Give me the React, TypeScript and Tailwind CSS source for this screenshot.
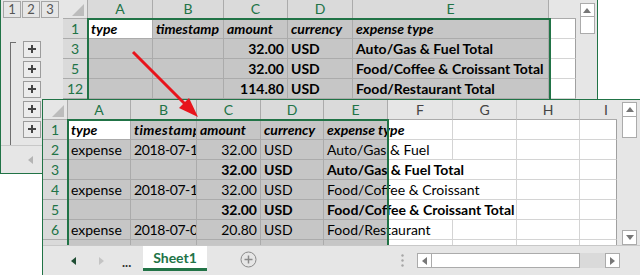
import React from 'react';

type Cell = { v?: string; n?: boolean; b?: boolean; i?: boolean; d?: boolean };

const hd = (v: string): Cell => ({ v, b: true, i: true });

// back window (outlined, collapsed to totals)
const backW = ['w-[65px]', 'w-[71px]', 'w-[64px]', 'w-[65px]', 'w-[196px]'];
const backRows: { n: string; c: Cell[] }[] = [
  { n: '1', c: [hd('type'), hd('timestamp'), hd('amount'), hd('currency'), hd('expense type')] },
  { n: '3', c: [{}, {}, { v: '32.00', n: true, b: true }, { v: 'USD', b: true }, { v: 'Auto/Gas & Fuel Total', b: true }] },
  { n: '5', c: [{}, {}, { v: '32.00', n: true, b: true }, { v: 'USD', b: true }, { v: 'Food/Coffee & Croissant Total', b: true }] },
  { n: '12', c: [{}, {}, { v: '114.80', n: true, b: true }, { v: 'USD', b: true }, { v: 'Food/Restaurant Total', b: true }] },
  { n: '16', c: [{}, {}, {}, {}, {}] },
  { n: '19', c: [{}, {}, {}, {}, {}] },
];

// front window (expanded)
const frontW = ['w-[63px]', 'w-[66px]', 'w-[64px]', 'w-[63px]', 'w-[64px]'];
const frontRows: { n: string; spill?: boolean; c: Cell[] }[] = [
  { n: '1', c: [hd('type'), { v: 'timestamp', b: true, i: true, d: true }, hd('amount'), hd('currency'), hd('expense type')] },
  { n: '2', c: [{ v: 'expense' }, { v: '2018-07-10', d: true }, { v: '32.00', n: true }, { v: 'USD' }, { v: 'Auto/Gas & Fuel' }] },
  { n: '3', spill: true, c: [{}, {}, { v: '32.00', n: true, b: true }, { v: 'USD', b: true }, { v: 'Auto/Gas & Fuel Total', b: true }] },
  { n: '4', spill: true, c: [{ v: 'expense' }, { v: '2018-07-12', d: true }, { v: '32.00', n: true }, { v: 'USD' }, { v: 'Food/Coffee & Croissant' }] },
  { n: '5', spill: true, c: [{}, {}, { v: '32.00', n: true, b: true }, { v: 'USD', b: true }, { v: 'Food/Coffee & Croissant Total', b: true }] },
  { n: '6', c: [{ v: 'expense' }, { v: '2018-07-08', d: true }, { v: '20.80', n: true }, { v: 'USD' }, { v: 'Food/Restaurant' }] },
  { n: '7', c: [{ v: 'expense' }, { v: '2018-07-06', d: true }, { v: '94.00', n: true }, { v: 'USD' }, { v: 'Food/Restaurant' }] },
];

const cellText = (c: Cell) =>
  `${c.n ? 'text-right' : ''} ${c.b ? 'font-bold' : ''} ${c.i ? 'italic' : ''} ${c.d ? (c.i ? 'tracking-[0.4px]' : 'tracking-[-0.4px]') : ''}`;

const Corner = () => (
  <div className="flex w-[25px] shrink-0 items-end justify-end border-r border-b border-[#ababab] pr-[3px] pb-[2px]">
    <svg width="12" height="12">
      <polygon points="12,0 12,12 0,12" fill="#bcbcbc" />
    </svg>
  </div>
);

const TriLeft = ({ c }: { c: string }) => (
  <svg width="5" height="8">
    <polygon points="5,0 0,4 5,8" fill={c} />
  </svg>
);
const TriRight = ({ c }: { c: string }) => (
  <svg width="5" height="8">
    <polygon points="0,0 5,4 0,8" fill={c} />
  </svg>
);
const TriUp = () => (
  <svg width="8" height="5">
    <polygon points="0,5 4,0 8,5" fill="#777" />
  </svg>
);
const TriDown = () => (
  <svg width="8" height="5">
    <polygon points="0,0 8,0 4,5" fill="#777" />
  </svg>
);

const PlusBox = () => (
  <div className="flex h-[17px] w-[18px] items-center justify-center border border-[#9c9c9c] bg-[#ececec]">
    <svg width="8" height="8">
      <rect x="0" y="3" width="8" height="2" fill="#444" />
      <rect x="3" y="0" width="2" height="8" fill="#444" />
    </svg>
  </div>
);

const BackWindow = () => (
  <div className="absolute left-0 top-0 flex h-[174px] w-[598px] flex-col overflow-hidden border-r border-b border-l border-[#217346] bg-[#e6e6e6]">
    <div className="flex h-[145px] shrink-0">
      {/* outline levels */}
      <div className="flex w-[62px] shrink-0 flex-col">
        <div className="flex h-[19px] shrink-0 gap-[1px] pt-[1px] pl-[2px]">
          {['1', '2', '3'].map((l) => (
            <div key={l} className="flex h-[17px] w-[18px] items-center justify-center border border-[#a6a6a6] text-[13px] text-[#555]">
              {l}
            </div>
          ))}
        </div>
        <div className="flex flex-1">
          <div className="w-[21px] shrink-0 pt-[23px] pl-[9px]">
            <div className="h-full w-[6px] border-t border-l border-[#6f6f6f]" />
          </div>
          <div className="flex flex-col pl-[1px]">
            <div className="h-[20px]" />
            {['3', '5', '12', '16', '19'].map((r) => (
              <div key={r} className="flex h-[20px] items-center">
                <PlusBox />
              </div>
            ))}
          </div>
        </div>
      </div>

      {/* sheet */}
      <div className="relative flex w-[513px] shrink-0 flex-col overflow-hidden">
        <div className="flex h-[19px] shrink-0">
          <Corner />
          {['A', 'B', 'C', 'D', 'E'].map((h, i) => (
            <div key={h} className={`${backW[i]} shrink-0 border-r border-b border-[#ababab] bg-[#dadada] text-center leading-[18px] text-[#217346]`}>
              {h}
            </div>
          ))}
          <div className="w-[27px] shrink-0 border-b border-[#ababab]" />
        </div>
        {backRows.map((row, r) => (
          <div key={row.n} className="flex h-[20px] shrink-0">
            <div className="w-[25px] shrink-0 border-r border-b border-[#ababab] bg-[#dadada] text-center leading-[19px] text-[#217346]">
              {row.n}
            </div>
            {row.c.map((c, i) => (
              <div
                key={i}
                className={`${backW[i]} shrink-0 overflow-hidden whitespace-nowrap border-r border-b border-[#ababab] px-[3px] leading-[19px] text-black ${r === 0 && i === 0 ? 'bg-white' : 'bg-[#c6c6c6]'} ${cellText(c)}`}
              >
                {c.v}
              </div>
            ))}
            <div className="w-[27px] shrink-0 border-r border-b border-[#d4d4d4] border-r-[#a0a0a0] bg-white" />
          </div>
        ))}
        <div className="pointer-events-none absolute left-[24px] top-[18px] h-[200px] w-[464px] border-2 border-[#217346]" />
      </div>

      {/* vertical scrollbar */}
      <div className="flex w-[21px] shrink-0 flex-col items-center pt-[3px] pl-[1px]">
        <div className="flex h-[14px] w-[15px] items-center justify-center border border-[#ababab] bg-white">
          <TriUp />
        </div>
        <div className="h-[17px] w-[15px] border border-t-0 border-[#ababab] bg-white" />
      </div>
    </div>

    {/* sheet tabs */}
    <div className="flex h-[28px] shrink-0 items-center border-t border-[#c8c8c8] pl-[27px]">
      <TriLeft c="#b4b4b4" />
      <div className="ml-[23px]">
        <TriRight c="#c8c8c8" />
      </div>
    </div>
  </div>
);

const FrontWindow = () => (
  <div className="absolute top-[99px] right-0 bottom-0 left-[42px] flex flex-col overflow-hidden border-t border-l border-[#217346] bg-[#e6e6e6]">
    <div className="flex h-[145px] shrink-0">
      <div className="relative flex w-[574px] shrink-0 flex-col overflow-hidden">
        <div className="flex h-[20px] shrink-0">
          <Corner />
          {['A', 'B', 'C', 'D', 'E'].map((h, i) => (
            <div key={h} className={`${frontW[i]} shrink-0 border-r border-b border-[#ababab] bg-[#dadada] text-center leading-[19px] text-[#217346]`}>
              {h}
            </div>
          ))}
          <div className="w-[65px] shrink-0 border-r border-b border-[#c6c6c6] border-b-[#ababab] text-center leading-[19px] text-[#444]">F</div>
          <div className="w-[64px] shrink-0 border-r border-b border-[#c6c6c6] border-b-[#ababab] text-center leading-[19px] text-[#444]">G</div>
          <div className="w-[63px] shrink-0 border-r border-b border-[#c6c6c6] border-b-[#ababab] text-center leading-[19px] text-[#444]">H</div>
          <div className="w-[37px] shrink-0 border-b border-[#ababab] pl-[24px] leading-[19px] text-[#444]">I</div>
        </div>
        {frontRows.map((row, r) => (
          <div key={row.n} className="flex h-[20px] shrink-0 bg-white">
            <div className="w-[25px] shrink-0 border-r border-b border-[#ababab] bg-[#dadada] text-center leading-[19px] text-[#217346]">
              {row.n}
            </div>
            {row.c.map((c, i) => (
              <div
                key={i}
                className={`${frontW[i]} shrink-0 whitespace-nowrap border-r border-b border-[#ababab] px-[3px] leading-[19px] text-black ${i === 4 ? 'overflow-visible' : 'overflow-hidden'} ${r === 0 && i === 0 ? 'bg-white' : 'bg-[#c6c6c6]'} ${cellText(c)}`}
              >
                {c.v}
              </div>
            ))}
            <div className={`w-[65px] shrink-0 border-b border-[#d4d4d4] ${row.spill ? '' : 'border-r'}`} />
            <div className="w-[64px] shrink-0 border-r border-b border-[#d4d4d4]" />
            <div className="w-[63px] shrink-0 border-r border-b border-[#d4d4d4]" />
            <div className="w-[37px] shrink-0 border-r border-b border-[#d4d4d4] border-r-[#a0a0a0]" />
          </div>
        ))}
        <div className="pointer-events-none absolute left-[24px] top-[19px] h-[200px] w-[322px] border-2 border-[#217346]" />
      </div>

      {/* vertical scrollbar */}
      <div className="flex w-[23px] shrink-0 flex-col pt-[2px] pl-[5px]">
        <div className="flex h-[15px] w-[15px] items-center justify-center border border-[#ababab] bg-white">
          <TriUp />
        </div>
        <div className="h-[21px] w-[15px] border border-t-0 border-[#ababab] bg-white" />
        <div className="flex-1" />
        <div className="flex h-[15px] w-[15px] items-center justify-center border border-[#ababab] bg-white">
          <TriDown />
        </div>
      </div>
    </div>

    {/* sheet tabs + horizontal scrollbar */}
    <div className="flex h-[30px] shrink-0 items-start border-t border-[#c8c8c8]">
      <div className="mt-[11px] ml-[28px]">
        <TriLeft c="#1f4d33" />
      </div>
      <div className="mt-[11px] ml-[23px]">
        <TriRight c="#c4c4c4" />
      </div>
      <div className="mt-[6px] ml-[18px] w-[12px] text-[13px] font-bold leading-[20px] text-[#333]">...</div>
      <div className="ml-[9px] flex h-[25px] w-[64px] items-center justify-center border-b-[3px] border-[#217346] bg-white pt-[1px] font-bold text-[#217346]">
        Sheet1
      </div>
      <div className="mt-[5px] ml-[33px]">
        <svg width="17" height="17">
          <circle cx="8.5" cy="8.5" r="7.5" fill="none" stroke="#8a8a8a" strokeWidth="1" />
          <line x1="4.5" y1="8.5" x2="12.5" y2="8.5" stroke="#8a8a8a" strokeWidth="1.5" />
          <line x1="8.5" y1="4.5" x2="8.5" y2="12.5" stroke="#8a8a8a" strokeWidth="1.5" />
        </svg>
      </div>
      <div className="mt-[8px] ml-[144px]">
        <svg width="3" height="13">
          <circle cx="1.5" cy="1.5" r="1.2" fill="#a6a6a6" />
          <circle cx="1.5" cy="6.5" r="1.2" fill="#a6a6a6" />
          <circle cx="1.5" cy="11.5" r="1.2" fill="#a6a6a6" />
        </svg>
      </div>
      <div className="mt-[7px] ml-[13px] flex h-[15px]">
        <div className="flex w-[15px] items-center justify-center border border-[#ababab] bg-white">
          <TriLeft c="#777" />
        </div>
        <div className="w-[148px] border border-l-0 border-[#ababab] bg-white" />
        <div className="w-[25px] bg-[#dadada]" />
        <div className="flex w-[15px] items-center justify-center border border-[#ababab] bg-white">
          <TriRight c="#777" />
        </div>
      </div>
    </div>
  </div>
);

export default function App() {
  return (
    <div className="relative h-[275px] w-[640px] overflow-hidden bg-white font-[family-name:Lato,sans-serif] text-[14px]">
      <BackWindow />
      <FrontWindow />
      <svg className="pointer-events-none absolute top-0 left-0" width="640" height="275">
        <line x1="133" y1="52" x2="187" y2="106" stroke="#e8141c" strokeWidth="3" />
        <polygon points="198,117 189,98 179,108" fill="#e8141c" />
      </svg>
    </div>
  );
}
